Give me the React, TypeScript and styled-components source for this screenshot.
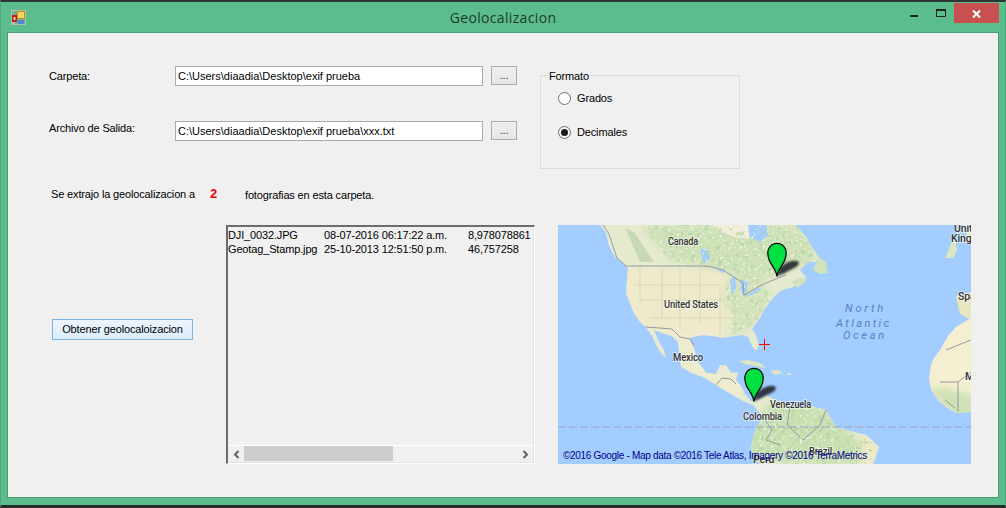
import React from "react";
import styled, { createGlobalStyle } from "styled-components";

const Global = createGlobalStyle`
  html, body { margin: 0; padding: 0; background: #2b3331; }
  body { width: 1006px; height: 508px; overflow: hidden; font-family: "Liberation Sans", Arial, sans-serif; }
`;

const Win = styled.div`
  width: 1006px; height: 508px; box-sizing: border-box;
  display: flex; flex-direction: column;
  background: #5bbd8c;
  border-top: 2px solid #2e3735;
  border-bottom: 3px solid #262c2b;
  border-left: 1px solid #4fa67b;
  border-right: 1px solid #4fa67b;
`;
const TitleBar = styled.div`
  height: 30px; flex: none;
  display: flex; align-items: flex-start;
  padding-left: 10px; box-sizing: border-box;
`;
const AppIcon = styled.svg`
  width: 15px; height: 15px; margin-top: 8px; flex: none;
`;
const Title = styled.div`
  flex: 1; text-align: center;
  font-family: "Open Sans", sans-serif; font-size: 14px; line-height: 18px;
  letter-spacing: 0.34px; color: #1f3a2d; margin-top: 7px; padding-left: 80px;
`;
const Controls = styled.div`
  display: flex; align-items: flex-start; margin-right: 6px; flex: none;
`;
const Ctl = styled.div<{ $w: number; $top: number; $bg?: string }>`
  width: ${(p) => p.$w}px; height: 20px; margin-top: 1px; box-sizing: border-box;
  padding-top: ${(p) => p.$top}px;
  background: ${(p) => p.$bg || "transparent"};
  display: flex; align-items: flex-start; justify-content: center;
  svg { display: block; }
`;
const Client = styled.div`
  width: 992px; height: 466px; box-sizing: border-box; margin-left: 6px;
  border: 1px solid #4a9c75; background: #f0f0f0; color: #000;
  padding: 33px 0 0 41px;
  font-size: 11px; line-height: 14px; letter-spacing: -0.15px;
`;
const Top = styled.div`
  display: flex; align-items: flex-start; height: 102px;
`;
const Paths = styled.div`
  display: flex; flex-direction: column; gap: 35px; width: 468px; flex: none;
`;
const PathRow = styled.div`
  display: flex; align-items: flex-start; height: 20px;
`;
const FieldLabel = styled.label<{ $top: number }>`
  width: 126px; flex: none; padding-top: ${(p) => p.$top}px;
`;
const PathInput = styled.div`
  width: 308px; height: 20px; box-sizing: border-box; flex: none;
  border: 1px solid #a9a9b0; background: #fff; padding: 2px 0 0 2px; line-height: 14px;
  white-space: nowrap; overflow: hidden; letter-spacing: 0;
`;
const Browse = styled.div`
  width: 26px; height: 19px; margin-left: 8px; box-sizing: border-box; flex: none;
  border: 1px solid #acacac; background: linear-gradient(#f0f0f0, #e5e5e5);
  text-align: center; line-height: 17px; font-size: 11px; color: #333;
`;
const Group = styled.div`
  position: relative; margin: 9px 0 0 23px; width: 200px; height: 94px; box-sizing: border-box;
  border: 1px solid #dcdcdc; padding: 15px 0 0 17px;
  display: flex; flex-direction: column; gap: 20px;
`;
const Legend = styled.div`
  position: absolute; top: -7px; left: 7px; background: #f0f0f0; padding: 0 1px; line-height: 14px;
`;
const RadioRow = styled.div`
  display: flex; align-items: center; gap: 6px; height: 14px;
`;
const Radio = styled.span<{ $on?: boolean }>`
  width: 13px; height: 13px; border-radius: 50%; box-sizing: border-box; flex: none;
  border: 1px solid #6f6f6f; background: ${(p) => (p.$on ? "#f4f4f4" : "#fff")};
  display: flex; align-items: center; justify-content: center;
  &::after {
    content: ""; width: 7px; height: 7px; border-radius: 50%;
    background: ${(p) => (p.$on ? "#1c1c1c" : "transparent")};
  }
`;
const Status = styled.div`
  display: grid; grid-template-columns: 159px 35px auto; margin: 19px 0 0 2px; height: 14px;
`;
const Count = styled.span`
  color: #f00000; font-weight: bold; font-size: 13px;
`;
const StatusEnd = styled.span`
  padding-top: 1px;
`;
const Bottom = styled.div`
  display: flex; align-items: flex-start; margin: 24px 0 0 3px;
`;
const ActionCol = styled.div`
  width: 174px; flex: none; padding-top: 94px;
`;
const Action = styled.div`
  width: 141px; height: 21px; box-sizing: border-box;
  border: 1px solid #7db4e8; background: linear-gradient(#ecf5fd, #dcecfc);
  text-align: center; line-height: 19px;
`;
const ListBox = styled.div`
  width: 309px; height: 239px; box-sizing: border-box; flex: none;
  border-style: solid; border-width: 2px 1px 1px 2px;
  border-color: #6d6d6d #fff #fff #6d6d6d;
  display: flex; flex-direction: column;
  box-shadow: inset -1px -1px 0 #e3e3e3;
`;
const ListBody = styled.div`
  flex: 1; overflow: hidden;
`;
const ListRow = styled.div`
  display: grid; grid-template-columns: 96px 144px 70px; height: 14px;
  white-space: nowrap; line-height: 14px;
  &:first-child { margin-top: 1px; }
`;
const HBar = styled.div`
  height: 17px; flex: none; box-sizing: border-box; margin-right: 1px; margin-bottom: 1px;
  border-top: 1px solid #fff; display: flex; align-items: stretch;
`;
const Arrow = styled.div`
  width: 16px; flex: none; display: flex; align-items: center; justify-content: center;
`;
const Track = styled.div`
  flex: 1; display: flex; align-items: stretch; padding-bottom: 1px;
`;
const Thumb = styled.div`
  width: 149px; background: #cdcdcd;
`;
const MapBox = styled.svg`
  width: 413px; height: 239px; margin-left: 23px; flex: none; display: block; overflow: hidden;
`;

const LAND = "#e6ebd0";
const na = "600,225 606,233 608,243 612,252 616,258 622,262 628,268 627,280 626,293 630,303 634,313 640,322 646,327 652,336 656,345 660,352 666,358 664,350 658,340 654,330 662,333 672,336 678,342 679,355 681,367 692,373 703,377 710,381 716,385 726,391 736,397 745,402 753,405 758,411 763,417 756,428 753,437 751,448 754,458 760,464 873,464 879,447 874,442 866,435 850,431 836,427 830,417 826,410 812,406 799,407 785,404 772,398 766,395 758,398 752,402 745,394 741,386 736,380 738,372 731,373 726,365 720,365 716,374 706,373 698,362 693,345 689,338 703,335 713,336 723,338 735,336 743,335 748,337 752,346 756,351 759,346 756,335 752,329 760,318 766,307 772,299 779,292 786,289 793,287 806,277 800,270 808,262 816,262 819,257 812,247 806,237 796,225";
const africa = "971,318 956,327 948,336 940,350 934,358 931,365 929,378 931,390 938,400 946,407 956,413 971,412";
const greenNorth = "640,225 670,260 700,266 724,272 744,285 760,282 790,270 812,262 818,254 796,225";
const greenSouth = "763,412 748,437 748,464 880,464 872,442 850,431 836,424 826,408 800,405 775,396";
const greenEast = "725,280 760,282 772,298 760,318 748,330 725,335 735,320 725,305";

function Pin({ x, y }: { x: number; y: number }) {
  return (
    <g transform={`translate(${x} ${y})`}>
      <path d="M0 0 L3 -9 C9 -14 16 -17 21 -15 C23 -13 21 -10 16 -8 C10 -5 5 -2 0 0 Z" fill="#23262e" opacity="0.9" filter="url(#shadowBlur)" />
      <path
        d="M0 0 C-1 -9 -9 -13 -9 -22 A9.2 9.2 0 1 1 9 -22 C9 -13 1 -9 0 0 Z"
        fill="#00e040" stroke="#0a0a0a" strokeWidth="1.3"
      />
    </g>
  );
}

function MapText({ x, y, w, children, size = 10.5 }: { x: number; y: number; w?: number; children: string; size?: number }) {
  return (
    <text
      x={x} y={y} textLength={w} lengthAdjust={w ? "spacingAndGlyphs" : undefined}
      fontFamily="Roboto, sans-serif" fontSize={size} fontWeight={500}
      fill="#333" stroke="#fff" strokeWidth="2" strokeOpacity="0.55" paintOrder="stroke"
    >
      {children}
    </text>
  );
}

function WorldMap() {
  return (
    <MapBox viewBox="558 225 413 239">
      <defs>
        <filter id="soft" x="-5%" y="-5%" width="110%" height="110%"><feGaussianBlur stdDeviation="0.45" /></filter>
        <filter id="wide" x="-10%" y="-10%" width="120%" height="120%"><feGaussianBlur stdDeviation="3.5" /></filter>
        <filter id="shadowBlur" x="-30%" y="-60%" width="160%" height="220%"><feGaussianBlur stdDeviation="1" /></filter>
        <filter id="mottle" x="0" y="0" width="100%" height="100%">
          <feTurbulence type="fractalNoise" baseFrequency="0.22" numOctaves="3" seed="7" result="n" />
          <feColorMatrix in="n" type="matrix" values="0 0 0 0 0  0 0 0 0 0  0 0 0 0 0  8 0 0 0 -4.6" result="m" />
          <feComposite in="SourceGraphic" in2="m" operator="in" />
          <feGaussianBlur stdDeviation="0.5" />
        </filter>
        <filter id="speck" x="0" y="0" width="100%" height="100%">
          <feTurbulence type="fractalNoise" baseFrequency="0.35" numOctaves="2" seed="21" result="n" />
          <feColorMatrix in="n" type="matrix" values="0 0 0 0 0  0 0 0 0 0  0 0 0 0 0  9 0 0 0 -5.6" result="m" />
          <feComposite in="SourceGraphic" in2="m" operator="in" />
          <feGaussianBlur stdDeviation="0.4" />
        </filter>
        <clipPath id="landClip"><polygon points={na} /><polygon points={africa} /></clipPath>
        <clipPath id="greenClip">
          <polygon points={greenNorth} /><polygon points={greenSouth} /><polygon points={greenEast} />
        </clipPath>
      </defs>
      <rect x="558" y="225" width="413" height="239" fill="#a3ccff" />
      <polygon points={na} fill={LAND} filter="url(#soft)" />
      <polygon points={africa} fill="#f3efd0" filter="url(#soft)" />
      <g clipPath="url(#landClip)">
        <g filter="url(#wide)">
          <polygon points="625,268 708,270 723,274 740,288 738,300 722,306 730,320 722,338 700,338 680,338 654,332 640,330 620,310 620,290" fill="#efeacb" />
          <polygon points="654,330 678,342 692,373 716,385 736,397 741,386 736,380 731,373 716,374 698,362 693,338 670,332" fill="#f0ecce" />
          <polygon points={greenNorth} fill="#cfe1b7" />
          <polygon points={greenEast} fill="#d4e3bb" />
          <polygon points={greenSouth} fill="#c9e0b2" />
          <polygon points="850,431 866,435 874,442 885,447 880,470 858,470 862,445" fill="#ece9c6" />
          <polygon points="925,390 938,400 946,410 956,418 975,416 975,396 945,388" fill="#d0e1b6" />
        </g>
      </g>
      <g filter="url(#soft)">
        <polygon points="813,270 819,257 826,262 828,273 820,274" fill="#d2e2ba" />
        <polygon points="791,282 800,278 808,279 798,288" fill="#d2e2ba" />
        <polygon points="945,258 951,244 955,238 957,250 953,258" fill="#dbe6c2" />
        <polygon points="971,226 966,234 968,242 971,244" fill="#e0e6c6" />
        <polygon points="956,296 971,292 971,320 960,314 958,306" fill="#e7e6bf" />
        <polygon points="739,361 748,360 760,363 766,368 755,366 745,364" fill="#dfe5c4" />
        <polygon points="770,371 778,370 783,373 775,375" fill="#dfe5c4" />
        <polygon points="787,373 791,373 791,375 787,375" fill="#dfe5c4" />
        <polygon points="716,225 748,225 750,238 738,238 722,232" fill="#f0eeda" />
        <polygon points="748,225 766,225 768,236 760,242 750,238" fill="#a3ccff" />
        <polygon points="700,250 707,248 710,258 704,264" fill="#a3ccff" />
        <polygon points="716,268 726,270 722,273" fill="#a3ccff" />
        <polygon points="730,280 735,276 736,288 732,296" fill="#a3ccff" />
        <polygon points="740,279 748,282 745,297 741,292" fill="#a3ccff" />
        <polygon points="746,296 757,288 762,289 752,295" fill="#a3ccff" />
      </g>
      <g clipPath="url(#landClip)">
        <g clipPath="url(#greenClip)">
          <rect x="558" y="225" width="413" height="239" fill="#a9d097" filter="url(#mottle)" opacity="0.55" />
          <rect x="558" y="225" width="413" height="239" fill="#fbfbf4" filter="url(#speck)" opacity="0.7" />
        </g>
      </g>
      <polygon points="625,228 634,232 654,262 640,262" fill="#a8c79a" opacity="0.5" filter="url(#soft)" />
      <g fill="none" stroke="#cbc9ab" strokeWidth="0.7" opacity="0.8">
        <path d="M640 268V300M662 268V318M680 268V330M700 268V325M640 300H725M635 285H720M650 318H735M720 285V335M735 296V335M745 330L765 308" />
      </g>
      <g fill="none" stroke="#8f8f9d" strokeWidth="0.9">
        <path d="M603 225L609 234M609 234L617 258L626 266L708 266L723 270L743 283L744 295L756 288L766 283L786 275" />
        <path d="M646 327L672 329L680 337L690 339L694 346" />
        <path d="M716 385L722 378L731 379L736 384M763 417L772 430L766 440L780 445M790 407L787 425L800 437M826 410L820 425L803 440" />
        <path d="M946 350L971 340M940 382L958 382L971 372M945 400L955 408M958 382L958 412" />
      </g>
      <line x1="558" y1="427" x2="971" y2="427" stroke="#a3a0c0" strokeWidth="1.2" strokeDasharray="8 3" />

      <MapText x={668} y={245} w={30}>Canada</MapText>
      <MapText x={664} y={308} w={54}>United States</MapText>
      <MapText x={673} y={361} w={30}>Mexico</MapText>
      <MapText x={743} y={420} w={39}>Colombia</MapText>
      <MapText x={770} y={408} w={41}>Venezuela</MapText>
      <MapText x={809} y={455} w={23}>Brazil</MapText>
      <MapText x={753} y={463}>Peru</MapText>
      <MapText x={954} y={232}>United</MapText>
      <MapText x={951} y={242}>Kingdom</MapText>
      <MapText x={958} y={300}>Spain</MapText>
      <MapText x={965} y={380}>Mali</MapText>

      <g fontFamily="Roboto, sans-serif" fontStyle="italic" fontSize="11" fill="#5480c8">
        <text x={845} y={312} textLength={38}>North</text>
        <text x={836} y={327} textLength={53}>Atlantic</text>
        <text x={843} y={339} textLength={41}>Ocean</text>
      </g>

      <path d="M759 344.5H770M764.5 339V350" stroke="#f00" strokeWidth="1" />
      <Pin x={777} y={276.5} />
      <Pin x={754} y={401.5} />

      <text x={563} y={458.5} textLength={304} fontFamily="'Liberation Sans', sans-serif" fontSize="10" fill="#00008b">
        ©2016 Google - Map data ©2016 Tele Atlas, Imagery ©2016 TerraMetrics
      </text>
    </MapBox>
  );
}

export default function App() {
  return (
    <Win>
      <Global />
      <TitleBar>
        <AppIcon viewBox="0 0 15 15">
          <rect x="0" y="0" width="15" height="15" fill="#a9c2ae" />
          <rect x="1" y="1" width="13" height="13" fill="#6fb48f" />
          <rect x="1" y="5" width="5" height="7" fill="#b81e1e" />
          <rect x="2.5" y="7" width="2" height="3" fill="#f2d0a0" />
          <rect x="6" y="1" width="8" height="8" fill="#c88a10" />
          <rect x="7" y="2" width="6" height="6" fill="#f8d65c" />
          <rect x="7" y="10" width="6" height="4" fill="#4f86dc" />
          <rect x="1" y="12" width="3" height="2" fill="#a9c2ae" />
        </AppIcon>
        <Title>Geolocalizacion</Title>
        <Controls>
          <Ctl $w={28} $top={12}>
            <svg width="8" height="2"><rect width="8" height="2" fill="#222" /></svg>
          </Ctl>
          <Ctl $w={26} $top={6}>
            <svg width="10" height="8"><path d="M0.5 1H9.5V7.5H0.5Z" fill="none" stroke="#222" /><rect width="10" height="2" fill="#222" /></svg>
          </Ctl>
          <Ctl $w={45} $top={7} $bg="#c75050">
            <svg width="9" height="8"><path d="M1 0.5L8 7.5M8 0.5L1 7.5" stroke="#fff" strokeWidth="2" /></svg>
          </Ctl>
        </Controls>
      </TitleBar>
      <Client>
        <Top>
          <Paths>
            <PathRow>
              <FieldLabel $top={3}>Carpeta:</FieldLabel>
              <PathInput>C:\Users\diaadia\Desktop\exif prueba</PathInput>
              <Browse>...</Browse>
            </PathRow>
            <PathRow>
              <FieldLabel $top={0}>Archivo de Salida:</FieldLabel>
              <PathInput>C:\Users\diaadia\Desktop\exif prueba\xxx.txt</PathInput>
              <Browse>...</Browse>
            </PathRow>
          </Paths>
          <Group>
            <Legend>Formato</Legend>
            <RadioRow><Radio />Grados</RadioRow>
            <RadioRow><Radio $on />Decimales</RadioRow>
          </Group>
        </Top>
        <Status>
          <span>Se extrajo la geolocalizacion a</span>
          <Count>2</Count>
          <StatusEnd>fotografias en esta carpeta.</StatusEnd>
        </Status>
        <Bottom>
          <ActionCol><Action>Obtener geolocaloizacion</Action></ActionCol>
          <ListBox>
            <ListBody>
              <ListRow><span>DJI_0032.JPG</span><span>08-07-2016 06:17:22 a.m.</span><span>8,978078861</span></ListRow>
              <ListRow><span>Geotag_Stamp.jpg</span><span>25-10-2013 12:51:50 p.m.</span><span>46,757258</span></ListRow>
            </ListBody>
            <HBar>
              <Arrow><svg width="7" height="9"><path d="M5.5 1L2 4.5L5.5 8" fill="none" stroke="#606060" strokeWidth="2" /></svg></Arrow>
              <Track><Thumb /></Track>
              <Arrow><svg width="7" height="9"><path d="M1.5 1L5 4.5L1.5 8" fill="none" stroke="#606060" strokeWidth="2" /></svg></Arrow>
            </HBar>
          </ListBox>
          <WorldMap />
        </Bottom>
      </Client>
    </Win>
  );
}
